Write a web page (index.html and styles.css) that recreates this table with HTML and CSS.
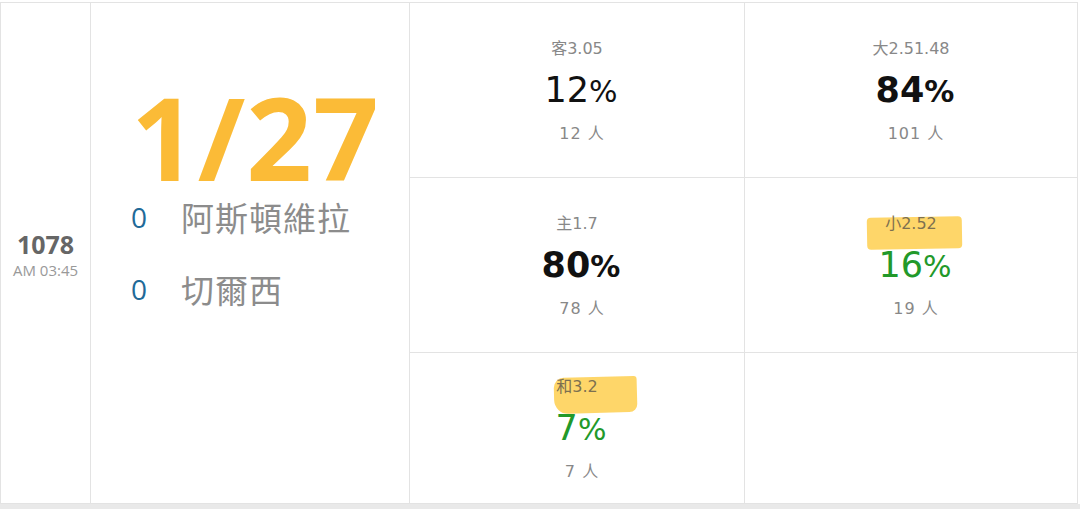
FILE: index.html
```html
<!DOCTYPE html>
<html lang="zh-Hant">
<head>
  <meta charset="UTF-8">
  <title>1078 阿斯頓維拉 vs 切爾西</title>
  <link rel="stylesheet" href="styles.css">
</head>
<body>
  <div class="page">
    <div class="board">
      <div class="cell match-no">
        <div class="no">1078</div>
        <div class="time">AM 03:45</div>
      </div>
      <div class="cell match">
        <div class="score">1/27</div>
        <div class="teams">
          <div class="team"><span class="goals">0</span><span class="name">阿斯頓維拉</span></div>
          <div class="team"><span class="goals">0</span><span class="name">切爾西</span></div>
        </div>
      </div>
      <div class="cell odd">
        <div class="label">客3.05</div>
        <div class="pct">12<span class="sign">%</span></div>
        <div class="count">12 人</div>
      </div>
      <div class="cell odd">
        <div class="label">大2.51.48</div>
        <div class="pct bold">84<span class="sign">%</span></div>
        <div class="count">101 人</div>
      </div>
      <div class="cell odd">
        <div class="label">主1.7</div>
        <div class="pct bold">80<span class="sign">%</span></div>
        <div class="count">78 人</div>
      </div>
      <div class="cell odd">
        <div class="label"><span class="mark mark-a">小2.52</span></div>
        <div class="pct win">16<span class="sign">%</span></div>
        <div class="count">19 人</div>
      </div>
      <div class="cell odd">
        <div class="label"><span class="mark mark-b">和3.2</span></div>
        <div class="pct win">7<span class="sign">%</span></div>
        <div class="count">7 人</div>
      </div>
      <div class="cell odd"></div>
    </div>
  </div>
</body>
</html>
```

FILE: styles.css
```css
html, body {
  margin: 0;
  padding: 0;
  background: #e9e9e9;
  height: 100%;
}
body {
  font-family: 'Open Sans', 'Noto Sans CJK TC', sans-serif;
}
.page {
  background: #fff;
  padding-top: 2px;
  width: 1080px;
}
.board {
  display: grid;
  grid-template-columns: 91px 319px 335px 333px;
  grid-template-rows: 175px 175px 151px;
  border-top: 1px solid #e3e3e3;
  width: 1078px;
}
.cell {
  box-sizing: border-box;
  border-right: 1px solid #e3e3e3;
  border-bottom: 1px solid #e3e3e3;
  background: #fff;
  position: relative;
  z-index: 0;
}
.match-no {
  grid-row: 1 / 4;
  border-left: 1px solid #e3e3e3;
  display: flex;
  flex-direction: column;
  align-items: center;
  justify-content: center;
  padding-top: 6px;
}
.no {
  font-size: 25px;
  font-weight: 700;
  color: #666;
  line-height: 28px;
}
.time {
  font-size: 15px;
  color: #999;
  line-height: 24px;
}
.match {
  grid-row: 1 / 4;
  padding-left: 40px;
}
.score {
  margin-top: 88px;
  font-size: 115px;
  line-height: 92px;
  font-weight: 700;
  color: #fbbb37;
  letter-spacing: 1px;
}
.teams {
  margin-top: -2px;
}
.team {
  display: flex;
  align-items: center;
  height: 72px;
}
.goals {
  width: 50px;
  font-size: 28px;
  color: #1f6a98;
}
.name {
  font-family: 'Noto Sans CJK TC', sans-serif;
  font-size: 33px;
  color: #8c8c8c;
  letter-spacing: 1px;
}
.odd {
  display: flex;
  flex-direction: column;
  align-items: center;
  justify-content: center;
  font-family: 'DejaVu Sans', 'Noto Sans CJK TC', sans-serif;
  padding-top: 2px;
}
.label, .count {
  font-size: 16px;
  color: #888;
  line-height: 42px;
}
.label {
  padding-top: 2px;
  line-height: 40px;
}
.count {
  letter-spacing: 1px;
  padding-left: 10px;
}
.pct {
  font-size: 35px;
  line-height: 42px;
  color: #111;
  padding-left: 8px;
}
.pct .sign {
  font-size: 30px;
}
.pct.bold {
  font-weight: 700;
}
.pct.win {
  color: #22992a;
}
.mark {
  position: relative;
  color: #7d7050;
}
.mark::before {
  content: "";
  position: absolute;
  z-index: -1;
  background: rgba(253, 200, 55, 0.75);
}
.mark-a::before {
  left: -18px;
  right: -25px;
  top: 3px;
  bottom: -16px;
  border-radius: 4px;
  transform: rotate(-1deg);
}
.mark-b::before {
  left: -2px;
  right: -40px;
  top: 0;
  bottom: -17px;
  border-radius: 10px 3px 8px 14px;
  transform: rotate(-1.5deg);
}
```
